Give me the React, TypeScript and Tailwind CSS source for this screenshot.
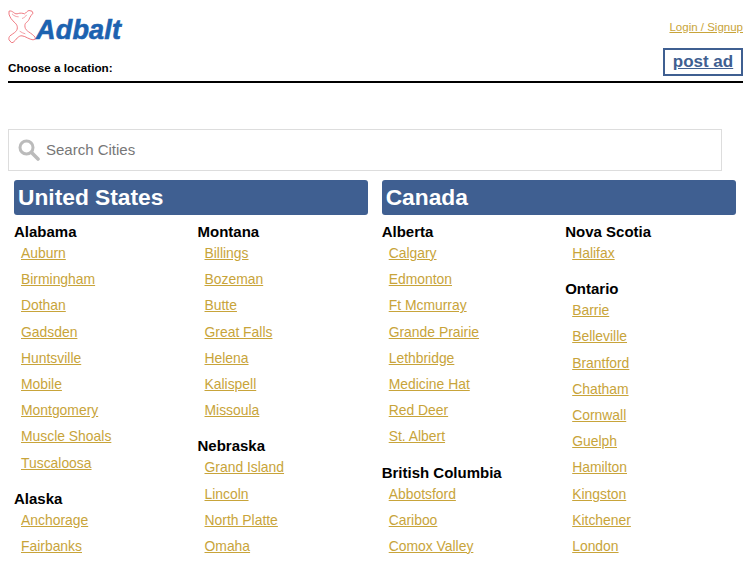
const regions = [
  {
    title: "United States",
    columns: [
      [
        { name: "Alabama", cities: ["Auburn", "Birmingham", "Dothan", "Gadsden", "Huntsville", "Mobile", "Montgomery", "Muscle Shoals", "Tuscaloosa"] },
        { name: "Alaska", cities: ["Anchorage", "Fairbanks"] },
      ],
      [
        { name: "Montana", cities: ["Billings", "Bozeman", "Butte", "Great Falls", "Helena", "Kalispell", "Missoula"] },
        { name: "Nebraska", cities: ["Grand Island", "Lincoln", "North Platte", "Omaha"] },
      ],
    ],
  },
  {
    title: "Canada",
    columns: [
      [
        { name: "Alberta", cities: ["Calgary", "Edmonton", "Ft Mcmurray", "Grande Prairie", "Lethbridge", "Medicine Hat", "Red Deer", "St. Albert"] },
        { name: "British Columbia", cities: ["Abbotsford", "Cariboo", "Comox Valley"] },
      ],
      [
        { name: "Nova Scotia", cities: ["Halifax"] },
        { name: "Ontario", cities: ["Barrie", "Belleville", "Brantford", "Chatham", "Cornwall", "Guelph", "Hamilton", "Kingston", "Kitchener", "London"] },
      ],
    ],
  },
];

function Logo() {
  return (
    <div className="flex h-[36px] items-start">
      <svg width="28" height="35" viewBox="10 12 84 100" fill="none" stroke="#ee7078" strokeWidth="2.8" strokeLinejoin="round" className="shrink-0">
        <path d="M13 16 C18 14 23 17 27 20 C31 24 36 25 41 23 C47 21 54 22 60 24 C64 21 68 15 73 14 L82 16 L85 22 C81 27 77 31 75 36 C73 42 70 47 65 50 C61 53 60 58 61 64 C62 70 66 74 72 78 C79 83 87 88 91 94 L92 100 L85 102 C79 101 74 99 68 96 C63 93 58 91 52 90 C47 89 43 92 38 96 C34 101 30 106 25 110 L20 110 L13 102 C12 97 13 93 16 90 C20 87 25 84 30 80 C35 76 38 72 38 66 C38 60 36 56 32 52 C27 47 22 43 19 38 C16 33 14 29 13 25 Z" />
        <path d="M22 24 C28 30 34 33 42 33 M66 27 C62 33 58 36 52 38 M45 76 C50 80 56 82 62 84" strokeWidth="2" />
      </svg>
      <span className="mt-[5px] text-[27px] leading-[32px] font-bold italic tracking-[0.2px] text-[#1c62b0] [-webkit-text-stroke:0.6px_#1c62b0]">
        Adbalt
      </span>
    </div>
  );
}

export default function App() {
  return (
    <div className="h-screen overflow-hidden bg-white pr-[7px] pl-2 font-['Liberation_Sans',Arial,sans-serif] text-black">
      {/* Header */}
      <div className="flex h-[83px] justify-between border-b-2 border-black">
        <div className="pt-[9px]">
          <Logo />
          <div className="mt-[16px] text-[11.7px] leading-[14px] font-bold">Choose a location:</div>
        </div>
        <div className="flex flex-col items-end pt-[20px]">
          <a href="#" className="text-[11.5px] leading-[15px] text-[#c8a43a] underline">
            Login / Signup
          </a>
          <a href="#" className="mt-[13px] flex h-[28px] w-[80px] items-center justify-center border-2 border-[#3f5f91] text-[17px] font-bold text-[#3f5f91] underline">
            post ad
          </a>
        </div>
      </div>

      {/* Search */}
      <div className="mt-[46px] flex h-[42px] w-[714px] items-center border border-[#dddddd] pl-[9px]">
        <svg width="22" height="22" viewBox="0 0 22 22" fill="none" stroke="#bbbbbb" className="shrink-0">
          <circle cx="8.5" cy="8.5" r="6.5" strokeWidth="3" />
          <path d="M13.5 13.5 L20 20" strokeWidth="3.6" strokeLinecap="round" />
        </svg>
        <span className="ml-[6px] text-[15px] text-[#777777]">Search Cities</span>
      </div>

      {/* Regions */}
      <div className="mt-[9px] flex gap-[13.7px] pl-[6px]">
        {regions.map((region) => (
          <div key={region.title} className="w-[354px] shrink-0">
            <div className="flex h-[35px] items-center rounded-[3px] bg-[#3f5f91] pl-[4px] text-[22.75px] font-bold text-white">
              {region.title}
            </div>
            <div className="mt-[6px] flex">
              {region.columns.map((states, i) => (
                <div key={i} className="w-[183.5px] shrink-0">
                  {states.map((state) => (
                    <div key={state.name} className="mb-[11px]">
                      <div className="h-[20px] text-[15px] leading-[21px] font-bold">{state.name}</div>
                      {state.cities.map((city) => (
                        <a
                          key={city}
                          href="#"
                          className="ml-[7px] block h-[26.2px] text-[13.9px] leading-[25px] text-[#c8a43a] underline"
                        >
                          {city}
                        </a>
                      ))}
                    </div>
                  ))}
                </div>
              ))}
            </div>
          </div>
        ))}
      </div>
    </div>
  );
}
